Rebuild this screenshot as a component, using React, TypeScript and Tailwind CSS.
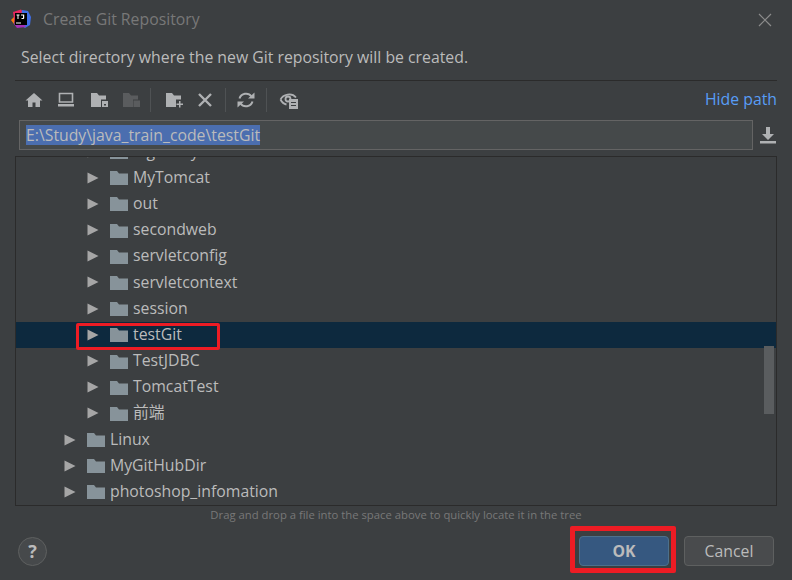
import type { ReactNode } from "react";

const font = { fontFamily: '"Open Sans", "Noto Sans CJK SC", sans-serif' };

function Folder({ className = "" }: { className?: string }) {
  return (
    <svg className={className} width="18" height="15" viewBox="0 0 18 15">
      <path d="M0 1h7l2 2.500h9V15H0z" fill="currentColor" />
    </svg>
  );
}

function ToolIcon({ children }: { children: ReactNode }) {
  return (
    <svg width="20" height="20" viewBox="0 0 20 20" className="text-[#afb1b3] shrink-0">
      {children}
    </svg>
  );
}

function Divider() {
  return <div className="w-px h-[24px] bg-[#4f5254] shrink-0" />;
}

function Logo() {
  return (
    <svg width="22" height="22" viewBox="0 1 22 22" className="shrink-0">
      <path d="M3 4 11 1.500l3 3.500-9 12z" fill="#e8265e" />
      <path d="M4 16 1 12l3-3z" fill="#f97a12" />
      <path d="M12 2l6 1 3 6-1 8-5 3-5-3z" fill="#3f6fe8" />
      <path d="M4 16l6-6 6 9-9 1z" fill="#a42fb8" />
      <rect x="5" y="5" width="12" height="12" fill="#000" />
      <rect x="6" y="14.500" width="5" height="1" fill="#fff" />
      <path d="M6.500 6.500h3v.9h-1v3.600h-1V7.400h-1z M11 6.500h3.200v3.600a1 1 0 0 1-1 1H11.500v-1H13V7.400h-2z" fill="#fff" />
    </svg>
  );
}

const rows = [
  { name: "loginstay", depth: 1 },
  { name: "MyTomcat", depth: 1 },
  { name: "out", depth: 1 },
  { name: "secondweb", depth: 1 },
  { name: "servletconfig", depth: 1 },
  { name: "servletcontext", depth: 1 },
  { name: "session", depth: 1 },
  { name: "testGit", depth: 1, selected: true },
  { name: "TestJDBC", depth: 1 },
  { name: "TomcatTest", depth: 1 },
  { name: "前端", depth: 1 },
  { name: "Linux", depth: 0 },
  { name: "MyGitHubDir", depth: 0 },
  { name: "photoshop_infomation", depth: 0 },
];

function TreeRow({ name, depth, selected }: { name: string; depth: number; selected?: boolean }) {
  return (
    <div className={`flex items-center h-[26.2px] shrink-0 ${selected ? "bg-[#0d293e]" : ""} ${depth === 1 ? "pl-[71px]" : "pl-[48px]"}`}>
      <svg width="12" height="12" viewBox="0 0 12 12" className="mr-[11px] shrink-0">
        <path d="M0.500 0.500 11.500 6 0.500 11.500z" fill="#a6a6a6" />
      </svg>
      <Folder className="text-[#87939a] mr-[5px] shrink-0" />
      <span className="text-[15.8px] leading-none text-[#bbbbbb] whitespace-nowrap">{name}</span>
    </div>
  );
}

export default function App() {
  return (
    <div className="relative w-[792px] h-[580px] overflow-hidden bg-[#3c3f41] flex flex-col" style={font}>
      {/* Title bar */}
      <div className="flex items-center h-[40px] pl-[10px] pr-[20px] shrink-0">
        <Logo />
        <span className="ml-[11px] text-[15.8px] text-[#787878]">Create Git Repository</span>
        <svg className="ml-auto" width="14" height="14" viewBox="0 0 14 14">
          <path d="M1 1l12 12M13 1 1 13" stroke="#8c8c8c" strokeWidth="1.200" fill="none" />
        </svg>
      </div>

      {/* Message */}
      <div className="h-[40px] pl-[21px] pt-[6px] text-[15.8px] text-[#bbbbbb] shrink-0">
        Select directory where the new Git repository will be created.
      </div>
      <div className="mx-[15px] h-px bg-[#2b2b2b] shrink-0" />

      {/* Toolbar */}
      <div className="flex items-center h-[39px] pb-[2px] ml-[24px] mr-[15px] gap-[10px] shrink-0">
        <div className="flex items-center gap-[12.300px] -mr-[1px]">
          <ToolIcon>
            <path d="M10 3 1.500 10.500H4V17h4.500v-4.500h3V17H16v-6.500h2.500z" fill="currentColor" />
          </ToolIcon>
          <ToolIcon>
            <path d="M3.500 3.500h13V12h-13z" fill="none" stroke="currentColor" strokeWidth="1.600" />
            <rect x="2" y="14" width="16" height="2.500" fill="currentColor" />
          </ToolIcon>
          <ToolIcon>
            <path d="M2 3h6l2 2.500h7v4h-5v7.500H2z" fill="currentColor" />
            <rect x="13" y="11" width="6" height="6" fill="currentColor" />
            <rect x="15" y="14" width="2" height="1.500" fill="#3c3f41" />
          </ToolIcon>
          <ToolIcon>
            <path d="M2 3h6l2 2.500h7v4h-5v7.500H2z" fill="#5a5c5e" />
            <rect x="12.500" y="10.500" width="6.500" height="6.500" fill="#5a5c5e" />
          </ToolIcon>
        </div>
        <Divider />
        <div className="flex items-center gap-[11px] ml-[3px]">
          <ToolIcon>
            <path d="M2 3h6l2 2.500h7v4h-5v7.500H2z" fill="currentColor" />
            <path d="M15 11v2.500h-2.500v1.500H15v2.500h1.500V15H19v-1.500h-2.500V11z" fill="currentColor" />
          </ToolIcon>
          <ToolIcon>
            <path d="M4 4l12 12M16 4 4 16" stroke="currentColor" strokeWidth="2.400" fill="none" />
          </ToolIcon>
        </div>
        <Divider />
        <ToolIcon>
          <path d="M3.500 8.500A6.800 6.800 0 0 1 15.500 6.500" stroke="currentColor" strokeWidth="2" fill="none" />
          <path d="M12 8.500h6.500V2.500z" fill="currentColor" />
          <path d="M16.500 11.500A6.800 6.800 0 0 1 4.500 13.500" stroke="currentColor" strokeWidth="2" fill="none" />
          <path d="M8 11.500H1.500v6z" fill="currentColor" />
        </ToolIcon>
        <Divider />
        <div className="ml-[2px]">
          <ToolIcon>
            <path d="M1.500 9.500C4 4 13 2.500 17 7.500" stroke="currentColor" strokeWidth="1.800" fill="none" />
            <path d="M1.500 9.500c1.500 3 3.500 4.500 6 5" stroke="currentColor" strokeWidth="1.800" fill="none" />
            <circle cx="9" cy="9" r="2.500" fill="none" stroke="currentColor" strokeWidth="1.800" />
            <rect x="10" y="9" width="9" height="10" fill="currentColor" />
            <path d="M12 12.500h5M12 15.500h5" stroke="#3c3f41" strokeWidth="1.200" />
          </ToolIcon>
        </div>
        <span className="ml-auto text-[15.8px] text-[#589df6]">Hide path</span>
      </div>

      {/* Path field */}
      <div className="flex items-center h-[30px] ml-[19px] mr-[15px] shrink-0">
        <div className="flex items-center flex-1 h-full bg-[#45494a] border border-[#646464] pl-[6px] text-[15.8px] text-[#bbbbbb]">
          <span className="bg-[#4b6eaf] leading-[20px]">E:\Study\java_train_code\testGit</span>
        </div>
        <svg className="ml-[7px] mr-[1px]" width="16" height="18" viewBox="0 0 16 18">
          <path d="M6 1h4v7h4l-6 6-6-6h4z" fill="#afb1b3" />
          <rect x="0" y="15" width="16" height="2.500" fill="#afb1b3" />
        </svg>
      </div>

      {/* Tree */}
      <div className="relative mt-[6px] mx-[15px] h-[350px] border border-[#2b2b2b] overflow-hidden flex flex-col shrink-0">
        <div className="flex flex-col -mt-[18.600px]">
          {rows.map((r) => (
            <TreeRow key={r.name} name={r.name} depth={r.depth} selected={r.selected} />
          ))}
        </div>
        <div className="absolute right-[2px] top-[189px] w-[10px] h-[68px] bg-[#5a5d5f]" />
      </div>

      <div className="text-center text-[11.300px] text-[#787878] leading-[18px] shrink-0">
        Drag and drop a file into the space above to quickly locate it in the tree
      </div>

      {/* Footer */}
      <div className="flex items-center pl-[18px] pr-[18px] mt-[12px] shrink-0">
        <div className="flex items-center justify-center w-[29px] h-[29px] rounded-full bg-[#46494b] border border-[#5e6060] text-[#bbbbbb] text-[18px] font-bold">
          ?
        </div>
        <div className="ml-auto w-[90px] h-[30px] pt-[2px] rounded-[4px] bg-[#365880] border border-[#4c708c] flex items-center justify-center text-[15.8px] font-bold text-[#bbbbbb]">
          OK
        </div>
        <div className="ml-[15px] w-[90px] h-[30px] pt-[2px] rounded-[4px] bg-[#494b4d] border border-[#5e6060] flex items-center justify-center text-[15.8px] text-[#bbbbbb]">
          Cancel
        </div>
      </div>

      {/* Red annotations */}
      <div className="absolute left-[76px] top-[323px] w-[144px] h-[27px] border-[3px] border-[#ed1c24] rounded-[2px]" />
      <div className="absolute left-[570px] top-[526px] w-[106px] h-[47px] border-[5px] border-[#ed1c24] rounded-[2px]" />
    </div>
  );
}
